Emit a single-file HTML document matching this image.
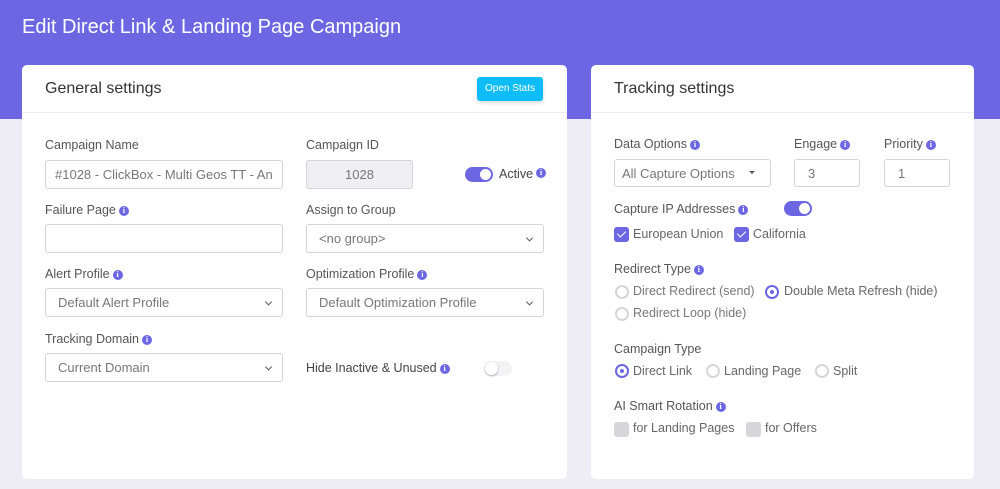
<!DOCTYPE html><html><head><style>
*{box-sizing:border-box;margin:0;padding:0}
body{width:1000px;height:489px;background:#eeedf5;font-family:"Liberation Sans",sans-serif;position:relative;overflow:hidden}
.top{position:absolute;left:0;top:0;width:1000px;height:119px;background:#6c66e3}
h1{position:absolute;left:22px;top:16px;color:#fff;font-size:20px;font-weight:normal}
.card{position:absolute;background:#fff;border-radius:5px;top:65px;height:414px}
.hd{position:absolute;left:0;right:0;top:0;height:48px;border-bottom:1px solid #eceaf2}
.ht{position:absolute;left:23px;top:15px;font-size:16px;color:#333}
.a{position:absolute}
.l{position:absolute;font-size:12.5px;color:#555;white-space:nowrap}
.in{position:absolute;border:1px solid #d4d4d8;border-radius:3px;background:#fff;font-size:13px;color:#777;padding-left:12px;display:flex;align-items:center;white-space:nowrap;overflow:hidden}
.sel::after{content:"";position:absolute;right:11px;top:50%;width:4px;height:4px;border-right:1.5px solid #555;border-bottom:1.5px solid #555;transform:translateY(-70%) rotate(45deg)}
.i{display:inline-block;width:10px;height:10px;border-radius:50%;background:#6c66e3;color:#fff;font-size:8px;font-weight:bold;text-align:center;line-height:10px;vertical-align:1px;margin-left:3px;font-family:"Liberation Serif",serif}
.tg{position:absolute;width:28px;height:15px;border-radius:8px;background:#6c66e3}
.tg::after{content:"";position:absolute;right:2px;top:2px;width:11px;height:11px;border-radius:50%;background:#fff}
.cb{position:absolute;width:15px;height:15px;border-radius:3px;background:#6c66e3}
.cb::after{content:"";position:absolute;left:5px;top:2px;width:4px;height:7px;border-right:1.5px solid #fff;border-bottom:1.5px solid #fff;transform:rotate(45deg)}
.cbo{position:absolute;width:15px;height:15px;border-radius:3px;background:#d6d6da}
.r{position:absolute;width:14px;height:14px;border-radius:50%;border:2px solid #d6d6da}
.ron{position:absolute;width:14px;height:14px;border-radius:50%;border:2px solid #6c66e3}
.ron::after{content:"";position:absolute;left:3px;top:3px;width:4px;height:4px;border-radius:50%;background:#6c66e3}
.t{position:absolute;font-size:12.5px;color:#666;white-space:nowrap}
</style></head><body>
<div class="top"></div>
<h1>Edit Direct Link &amp; Landing Page Campaign</h1>
<div class="card" style="left:22px;width:545px"><div class="hd"><div class="ht">General settings</div></div>
<div class="a" style="left:455px;top:12px;width:66px;height:24px;background:#0dbdf7;border-radius:3px;color:#fff;font-size:10px;text-align:center;line-height:24px;box-shadow:0 2px 4px rgba(0,0,0,.15)">Open Stats</div></div>
<div class="card" style="left:591px;width:383px"><div class="hd"><div class="ht">Tracking settings</div></div></div>

<div class="l" style="left:45px;top:138px">Campaign Name</div>
<div class="in" style="left:45px;top:160px;width:238px;height:29px;padding-left:9px">#1028 - ClickBox - Multi Geos TT - An</div>
<div class="l" style="left:306px;top:138px">Campaign ID</div>
<div class="in" style="left:306px;top:160px;width:107px;height:29px;background:#efeff3;justify-content:center;padding:0">1028</div>
<div class="tg" style="left:465px;top:167px"></div>
<div class="l" style="left:499px;top:167px;color:#444">Active<span class="i" style="vertical-align:3px">i</span></div>

<div class="l" style="left:45px;top:203px">Failure Page<span class="i">i</span></div>
<div class="in" style="left:45px;top:224px;width:238px;height:29px"></div>
<div class="l" style="left:306px;top:203px">Assign to Group</div>
<div class="in sel" style="left:306px;top:224px;width:238px;height:29px">&lt;no group&gt;</div>

<div class="l" style="left:45px;top:267px">Alert Profile<span class="i">i</span></div>
<div class="in sel" style="left:45px;top:288px;width:238px;height:29px">Default Alert Profile</div>
<div class="l" style="left:306px;top:267px">Optimization Profile<span class="i">i</span></div>
<div class="in sel" style="left:306px;top:288px;width:238px;height:29px">Default Optimization Profile</div>

<div class="l" style="left:45px;top:332px">Tracking Domain<span class="i">i</span></div>
<div class="in sel" style="left:45px;top:353px;width:238px;height:29px">Current Domain</div>
<div class="l" style="left:306px;top:361px;color:#444">Hide Inactive &amp; Unused<span class="i">i</span></div>
<div class="a" style="left:484px;top:361px;width:28px;height:15px;border-radius:8px;background:#f3f3f5"><div class="a" style="left:1px;top:1px;width:13px;height:13px;border-radius:50%;background:#fff;box-shadow:0 1px 2px rgba(0,0,0,.3)"></div></div>

<div class="l" style="left:614px;top:137px">Data Options<span class="i">i</span></div>
<div class="in" style="left:614px;top:159px;width:157px;height:28px;padding-left:7px">All Capture Options</div>
<div class="a" style="left:749px;top:171px;width:0;height:0;border-left:3px solid transparent;border-right:3px solid transparent;border-top:3px solid #555"></div>
<div class="l" style="left:794px;top:137px">Engage<span class="i">i</span></div>
<div class="in" style="left:794px;top:159px;width:66px;height:28px;padding-left:13px">3</div>
<div class="l" style="left:884px;top:137px">Priority<span class="i">i</span></div>
<div class="in" style="left:884px;top:159px;width:66px;height:28px;padding-left:13px">1</div>

<div class="l" style="left:614px;top:202px">Capture IP Addresses<span class="i">i</span></div>
<div class="tg" style="left:784px;top:201px"></div>
<div class="cb" style="left:614px;top:227px"></div><div class="t" style="left:633px;top:227px">European Union</div>
<div class="cb" style="left:734px;top:227px"></div><div class="t" style="left:753px;top:227px">California</div>

<div class="l" style="left:614px;top:262px">Redirect Type<span class="i">i</span></div>
<div class="r" style="left:615px;top:285px"></div><div class="t" style="left:633px;top:284px;color:#777">Direct Redirect (send)</div>
<div class="ron" style="left:765px;top:285px"></div><div class="t" style="left:784px;top:284px">Double Meta Refresh (hide)</div>
<div class="r" style="left:615px;top:307px"></div><div class="t" style="left:633px;top:306px;color:#777">Redirect Loop (hide)</div>

<div class="l" style="left:614px;top:342px">Campaign Type</div>
<div class="ron" style="left:615px;top:364px"></div><div class="t" style="left:633px;top:364px">Direct Link</div>
<div class="r" style="left:706px;top:364px"></div><div class="t" style="left:724px;top:364px">Landing Page</div>
<div class="r" style="left:815px;top:364px"></div><div class="t" style="left:833px;top:364px">Split</div>

<div class="l" style="left:614px;top:399px">AI Smart Rotation<span class="i">i</span></div>
<div class="cbo" style="left:614px;top:422px"></div><div class="t" style="left:633px;top:421px">for Landing Pages</div>
<div class="cbo" style="left:746px;top:422px"></div><div class="t" style="left:765px;top:421px">for Offers</div>
</body></html>
